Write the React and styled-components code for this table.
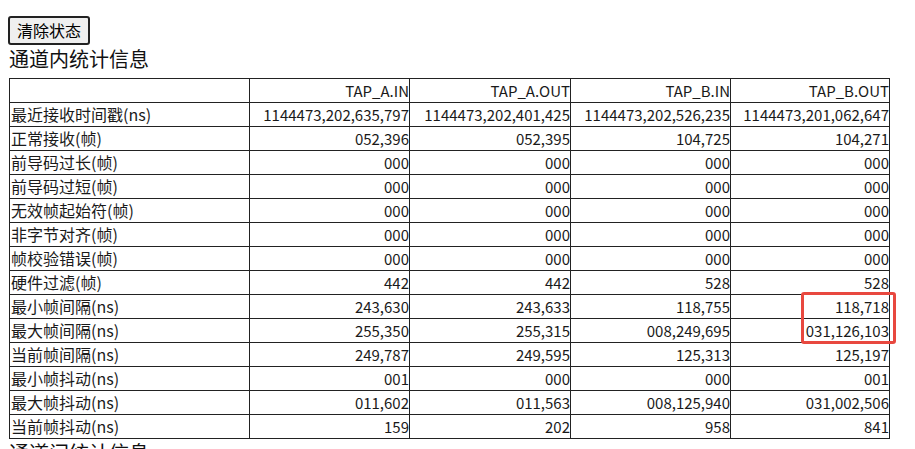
import React from 'react';
import styled, { createGlobalStyle } from 'styled-components';

const GlobalStyle = createGlobalStyle`
    body{
        margin:8px;
        font-family:"Noto Sans CJK SC","Noto Sans",sans-serif;
        color:#000;
        background:#fff;
        overflow:hidden;
    }
`;

const Page = styled.div`
    padding-top:8px;
`;

const ClearButton = styled.button`
    font-family:"Noto Sans CJK SC",sans-serif;
    font-size:16px;
    line-height:21px;
    padding:2px 7px;
    background:#efefef;
    border:2px solid #222;
    border-radius:3px;
    color:#000;
`;

const Title = styled.div`
    font-size:20px;
    line-height:28px;
    margin:0 0 5px 1px;
    color:#111;
`;

const TableWrap = styled.div`
    position:relative;
    margin-left:1px;
`;

const Table = styled.table`
    border-collapse:collapse;
    table-layout:fixed;
    font-size:15px;
    color:#1a1a1a;
    th,td{
        border:1px solid #222;
        padding:1px 0 1px 1px;
        height:21px;
        line-height:21px;
        font-weight:normal;
        text-align:right;
        white-space:nowrap;
        overflow:hidden;
    }
    td:first-child{
        text-align:left;
        font-size:16px;
    }
`;

const Mark = styled.div`
    position:absolute;
    left:792px;
    top:214px;
    width:89px;
    height:46px;
    border:3px solid #e8483f;
    border-radius:3px;
`;

const cols = ['TAP_A.IN','TAP_A.OUT','TAP_B.IN','TAP_B.OUT'];
const widths = [240,160,161,160,159];

const rows = [
    ['最近接收时间戳(ns)','1144473,202,635,797','1144473,202,401,425','1144473,202,526,235','1144473,201,062,647'],
    ['正常接收(帧)','052,396','052,395','104,725','104,271'],
    ['前导码过长(帧)','000','000','000','000'],
    ['前导码过短(帧)','000','000','000','000'],
    ['无效帧起始符(帧)','000','000','000','000'],
    ['非字节对齐(帧)','000','000','000','000'],
    ['帧校验错误(帧)','000','000','000','000'],
    ['硬件过滤(帧)','442','442','528','528'],
    ['最小帧间隔(ns)','243,630','243,633','118,755','118,718'],
    ['最大帧间隔(ns)','255,350','255,315','008,249,695','031,126,103'],
    ['当前帧间隔(ns)','249,787','249,595','125,313','125,197'],
    ['最小帧抖动(ns)','001','000','000','001'],
    ['最大帧抖动(ns)','011,602','011,563','008,125,940','031,002,506'],
    ['当前帧抖动(ns)','159','202','958','841'],
];

const App = () => {
    return (
        <Page>
            <GlobalStyle />
            <ClearButton>清除状态</ClearButton>
            <Title>通道内统计信息</Title>
            <TableWrap>
                <Table>
                    <colgroup>
                        {widths.map((w,i) => <col key={i} style={{width:w}} />)}
                    </colgroup>
                    <thead>
                        <tr>
                            <th></th>
                            {cols.map(c => <th key={c}>{c}</th>)}
                        </tr>
                    </thead>
                    <tbody>
                        {rows.map(r => (
                            <tr key={r[0]}>
                                {r.map((v,i) => <td key={i}>{v}</td>)}
                            </tr>
                        ))}
                    </tbody>
                </Table>
                <Mark />
            </TableWrap>
            <Title>通道间统计信息</Title>
        </Page>
    );
};

export default App;
